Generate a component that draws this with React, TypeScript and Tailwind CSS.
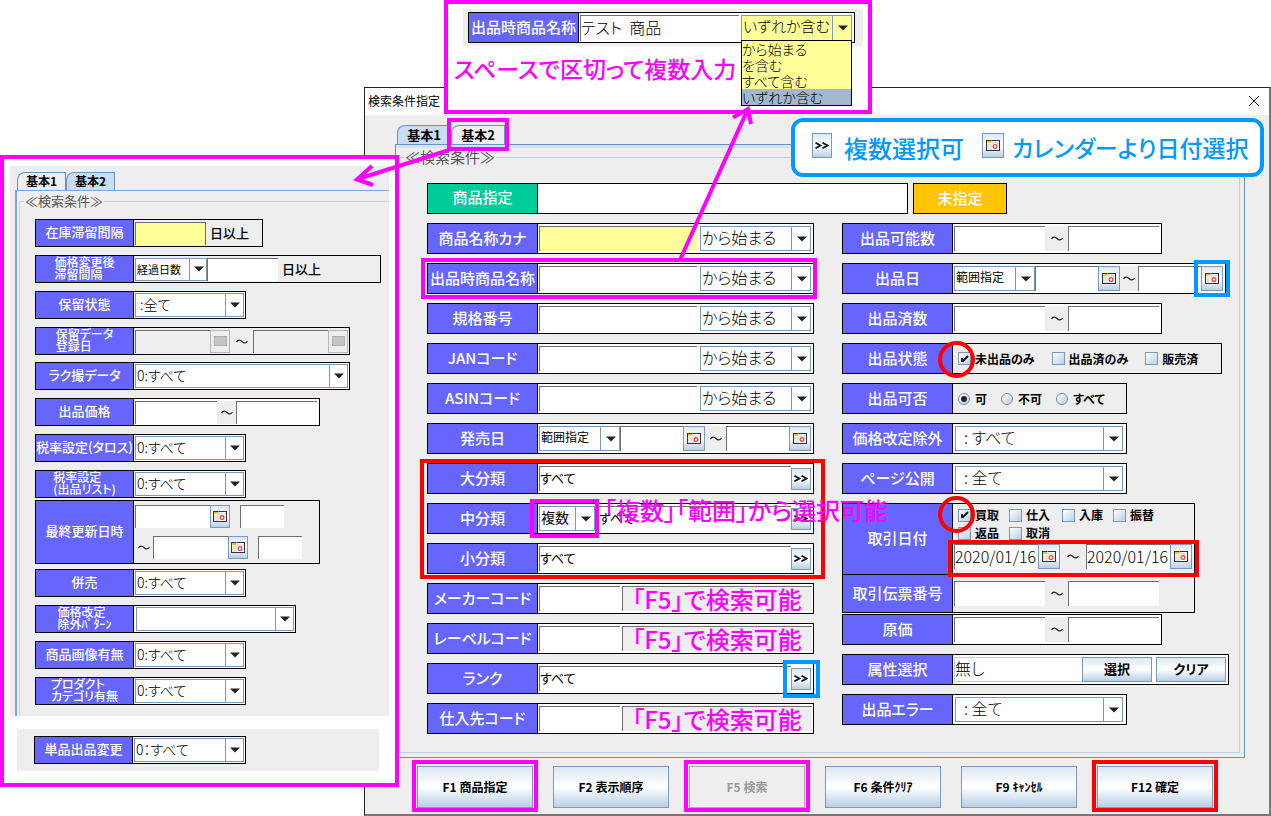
import React, { useState } from 'react';
import clsx from 'clsx';

const SUNKEN = 'border-t border-l border-[#6f6f6f]';
const BUTTON = 'border border-[#7a9ab8] bg-linear-to-b from-[#dde8f3] via-white to-[#b8cfe5]';

const FUNCTION_KEYS = [
  { key: 'F1', text: '商品指定', ring: 'border-[#ff00ff]' },
  { key: 'F2', text: '表示順序' },
  { key: 'F5', text: '検索', ring: 'border-[#ff00ff]', disabled: true },
  { key: 'F6', text: '条件ｸﾘｱ' },
  { key: 'F9', text: 'ｷｬﾝｾﾙ' },
  { key: 'F12', text: '確定', ring: 'border-[#ff0000]' },
];

function Row({
  id,
  label,
  width,
  className = 'bg-white',
  small,
  children,
}: {
  id: string;
  label: string;
  width: string;
  className?: string;
  small?: boolean;
  children: React.ReactNode;
}) {
  const lines = label.split('\n');
  return (
    <div className={clsx('relative flex border border-black', small ? 'min-h-7' : 'min-h-[31px]', width, className)}>
      <label
        htmlFor={id}
        className={clsx(
          'flex shrink-0 items-center justify-center border-r border-black bg-[#6666ff] pb-[2px] whitespace-nowrap text-white font-medium',
          small ? 'w-[98px]' : 'w-[110px] text-[15px] leading-5',
          small && (lines.length > 1 ? 'text-xs leading-3' : 'text-[13px] leading-4')
        )}
      >
        <span>
          {lines.map((line) => (
            <span key={line} className="block">
              {line}
            </span>
          ))}
        </span>
      </label>
      <div className="flex min-w-0 flex-1 items-center px-px">{children}</div>
    </div>
  );
}

function Field({
  id,
  name,
  className,
  value,
  disabled,
}: {
  id?: string;
  name: string;
  className: string;
  value?: string;
  disabled?: boolean;
}) {
  return (
    <input
      id={id}
      aria-label={id ? undefined : name}
      defaultValue={value}
      disabled={disabled}
      className={clsx(SUNKEN, 'block min-w-0 pb-[3px] outline-none', className)}
    />
  );
}

function Select({
  id,
  name,
  options,
  value,
  box,
  className = 'bg-white text-base',
  arrow = 'w-5',
}: {
  id?: string;
  name: string;
  options: string[];
  value?: string;
  box: string;
  className?: string;
  arrow?: string;
}) {
  return (
    <div className={clsx('relative shrink-0', box)}>
      <select
        id={id}
        aria-label={id ? undefined : name}
        defaultValue={value ?? options[0]}
        className={clsx(
          'block h-full w-full appearance-none border border-[#7a9ab8] pb-[3px] pl-px leading-5 outline-none',
          className
        )}
      >
        {options.map((o) => (
          <option key={o}>{o}</option>
        ))}
      </select>
      <span
        className={clsx(
          'pointer-events-none absolute inset-y-0 right-0 flex items-center justify-center border-l border-[#7a9ab8]',
          arrow
        )}
      >
        <svg width="10" height="6" viewBox="0 0 10 6">
          <path d="M0 0.5h10L5 5.5z" fill="#222" />
        </svg>
      </span>
    </div>
  );
}

function CalendarIcon({ muted }: { muted?: boolean }) {
  if (muted) {
    return (
      <svg width="13" height="10" viewBox="0 0 13 10">
        <rect x="0.5" y="0.5" width="12" height="9" fill="#c4c4c4" stroke="#b0b0b0" />
      </svg>
    );
  }
  return (
    <svg width="14" height="11" viewBox="0 0 14 11">
      <rect x="0.5" y="0.5" width="13" height="10" fill="#fff" stroke="#333" />
      <rect x="1" y="4" width="5" height="6" fill="#e6e6e6" />
      <path d="M1 1h4v2H1z" fill="#ffc61a" />
      <path d="M5 1h1v2h7" stroke="#ccc" fill="none" />
      <circle cx="9" cy="6.5" r="1.9" fill="#fff" stroke="#f33" strokeWidth="1.2" />
    </svg>
  );
}

function CalendarButton({
  className = 'h-[25px] w-[22px]',
  disabled,
}: {
  className?: string;
  disabled?: boolean;
}) {
  return (
    <button
      aria-label="カレンダー"
      disabled={disabled}
      className={clsx(
        'flex shrink-0 items-center justify-center',
        disabled ? 'border border-[#b5b5b5] bg-[#eee]' : BUTTON,
        className
      )}
    >
      <CalendarIcon muted={disabled} />
    </button>
  );
}

function MoreButton() {
  return (
    <button aria-label="複数選択" className={clsx(BUTTON, 'mr-px flex h-[22px] w-5 shrink-0 items-center justify-center')}>
      <MoreIcon />
    </button>
  );
}

function MoreIcon() {
  return (
    <svg width="14" height="7" viewBox="0 0 14 7" fill="none" stroke="#111" strokeWidth="1.7">
      <path d="M0.5 0.7L5.5 3.5L0.5 6.3M7.5 0.7L12.5 3.5L7.5 6.3" />
    </svg>
  );
}

function Tilde({ className }: { className: string }) {
  return (
    <span className={clsx('flex shrink-0 items-center justify-center bg-[#eee]', className)}>
      <svg width="12" height="5" viewBox="0 0 12 5" fill="none" stroke="#222" strokeWidth="1.2">
        <path d="M0.5 3C2 0.5 4 0.5 6 2.5S10 4.5 11.5 2" />
      </svg>
    </span>
  );
}

function Check({ label, checked, className }: { label: string; checked?: boolean; className?: string }) {
  return (
    <label className={clsx('relative flex items-center gap-1 text-xs leading-4 font-bold whitespace-nowrap', className)}>
      <input
        type="checkbox"
        defaultChecked={checked}
        className="peer size-[13px] shrink-0 appearance-none border border-[#7a9ab8] bg-linear-to-br from-white to-[#b8cfe5]"
      />
      <svg
        className="pointer-events-none absolute left-[3px] hidden peer-checked:block"
        width="8"
        height="8"
        viewBox="0 0 8 8"
        fill="none"
        stroke="#111"
        strokeWidth="1.8"
      >
        <path d="M1 3v4M1.5 6.5L7 1" />
      </svg>
      {label}
    </label>
  );
}

function Radio({ label, checked }: { label: string; checked?: boolean }) {
  return (
    <label className="flex items-center gap-[5px] text-xs leading-4 font-bold whitespace-nowrap">
      <span className="relative flex size-3 items-center justify-center">
        <input
          type="radio"
          name="listable"
          defaultChecked={checked}
          className="peer size-3 appearance-none rounded-full border border-[#7a8a9a] bg-linear-to-br from-white to-[#b8cfe5]"
        />
        <span className="pointer-events-none absolute hidden size-[6px] rounded-full bg-[#222] peer-checked:block" />
      </span>
      {label}
    </label>
  );
}

function Ring({ className }: { className: string }) {
  return <span className={clsx('pointer-events-none absolute z-10 border-4', className)} />;
}

function MatchRow({ id, label, yellow, ring }: { id: string; label: string; yellow?: boolean; ring?: boolean }) {
  return (
    <Row id={id} label={label} width="w-full">
      <Field id={id} name={label} className={clsx('mr-[3px] h-[25px] flex-1', yellow ? 'bg-[#ffff99]' : 'bg-white')} />
      <Select
        name={`${label} 条件`}
        options={['から始まる', 'を含む', 'すべて含む', 'いずれか含む']}
        box="mr-px h-[25px] w-[111px]"
        className="bg-white text-base font-light"
      />
      {ring && <Ring className="-left-[7px] -right-1 -inset-y-[6px] border-[#ff00ff]" />}
    </Row>
  );
}

function CodeRow({ id, label }: { id: string; label: string }) {
  return (
    <Row id={id} label={label} width="w-full">
      <Field id={id} name={label} className="h-[25px] w-[81px] bg-white" />
      <div className="relative ml-[2px] flex-1">
        <Field name={`${label} 名称`} disabled className="h-[25px] w-full bg-[#eee]" />
        <span className="absolute inset-0 flex items-center justify-center pt-px text-2xl font-medium whitespace-nowrap text-[#ff00ff]">
          「F5」で検索可能
        </span>
      </div>
    </Row>
  );
}

function RangeFields({ id, label }: { id: string; label: string }) {
  return (
    <>
      <Field id={id} name={label} className="h-[25px] w-[91px] bg-white" />
      <Tilde className="h-[25px] w-[23px]" />
      <Field name={`${label} 終了`} className="h-[25px] w-[91px] bg-white" />
    </>
  );
}

function DateRange({ id, label, ring }: { id: string; label: string; ring?: boolean }) {
  return (
    <>
      <Select id={id} name={label} options={['範囲指定']} box="h-[25px] w-[81px]" className="bg-white text-xs" />
      <Field name={`${label} 開始`} className="h-[25px] w-[63px] bg-white" />
      <CalendarButton />
      <Tilde className="h-[25px] flex-1" />
      <Field name={`${label} 終了`} className="h-[25px] w-[63px] bg-white" />
      <div className="relative mr-px">
        <CalendarButton />
        {ring && <Ring className="-inset-x-[7px] -inset-y-[6px] border-[#0099ff]" />}
      </div>
    </>
  );
}

function SmallSelect({
  id,
  label,
  options = ['0:すべて'],
  box = 'h-6 w-[109px]',
}: {
  id: string;
  label: string;
  options?: string[];
  box?: string;
}) {
  return <Select id={id} name={label} options={options} box={box} className="bg-white text-sm font-light" arrow="w-[19px]" />;
}

function WideSelect({ id, label, options }: { id: string; label: string; options: string[] }) {
  return (
    <Select id={id} name={label} options={options} box="ml-px h-[25px] w-[168px]" className="bg-white text-base font-light" />
  );
}

function Tabs({ active, onChange, small }: { active: number; onChange: (n: number) => void; small?: boolean }) {
  return (
    <div role="tablist" className="ml-[2px] flex">
      {['基本1', '基本2'].map((name, i) => (
        <div key={name} className="relative">
          <button
            role="tab"
            aria-selected={active === i}
            onClick={() => onChange(i)}
            className={clsx(
              'block rounded-tl-lg border border-b-0 border-[#6a93c0] pb-px font-bold',
              small ? 'h-[18px] w-[49px] text-xs leading-4' : 'h-[19px] w-[54px] text-[13px] leading-4',
              active === i ? 'bg-[#c8ddf2]' : 'bg-[#eee]'
            )}
          >
            {name}
          </button>
          {!small && i === 1 && <Ring className="-inset-x-1 -inset-y-[7px] border-[#ff00ff]" />}
        </div>
      ))}
    </div>
  );
}

function BasicOneForm() {
  return (
    <>
      <div className="flex gap-[5px]">
        <div className="flex h-[31px] w-[481px] border border-black bg-white">
          <label
            htmlFor="item"
            className="flex w-[110px] shrink-0 items-center justify-center border-r border-black bg-[#00cc99] pb-[2px] text-[15px] font-medium text-white"
          >
            商品指定
          </label>
          <input id="item" className="min-w-0 flex-1 outline-none" />
        </div>
        <button className="h-[31px] w-[94px] border border-black bg-[#ffc600] pb-[2px] text-[15px] leading-5 font-medium text-white">
          未指定
        </button>
      </div>

      <div className="mt-[9px] flex items-start gap-7">
        <div className="flex w-[387px] flex-col gap-[9px]">
          <MatchRow id="kana" label="商品名称カナ" yellow />
          <MatchRow id="listed-name" label="出品時商品名称" ring />
          <MatchRow id="standard" label="規格番号" />
          <MatchRow id="jan" label="JANコード" />
          <MatchRow id="asin" label="ASINコード" />
          <Row id="release" label="発売日" width="w-full">
            <DateRange id="release" label="発売日" />
          </Row>

          {/* Category rows share one red frame */}
          <div className="relative flex flex-col gap-[9px]">
            <Row id="large" label="大分類" width="w-full">
              <Field id="large" name="大分類" value="すべて" className="h-[25px] flex-1 bg-white text-[13px]" />
              <MoreButton />
            </Row>
            <Row id="middle" label="中分類" width="w-full">
              <div className="relative">
                <Select id="middle" name="中分類" options={['複数', '範囲']} box="h-[25px] w-14" className="bg-white text-sm" />
                <Ring className="-left-[9px] -right-1 -inset-y-[7px] border-[#ff00ff]" />
              </div>
              <Field name="中分類 値" value="すべて" className="h-[25px] flex-1 bg-white pl-[3px] text-[13px]" />
              <MoreButton />
              <span className="absolute -top-[6px] left-[176px] z-20 text-2xl leading-6 font-medium whitespace-nowrap text-[#ff00ff]">
                「複数」「範囲」から選択可能
              </span>
            </Row>
            <Row id="small" label="小分類" width="w-full">
              <Field id="small" name="小分類" value="すべて" className="h-[25px] flex-1 bg-white text-[13px]" />
              <MoreButton />
            </Row>
            <Ring className="-left-[7px] -right-[11px] -top-1 -bottom-[5px] border-[#ff0000]" />
          </div>

          <CodeRow id="maker" label="メーカーコード" />
          <CodeRow id="label" label="レーベルコード" />
          <Row id="rank" label="ランク" width="w-full">
            <Field id="rank" name="ランク" value="すべて" className="h-[25px] flex-1 bg-white text-[13px]" />
            <div className="relative">
              <MoreButton />
              <Ring className="-inset-2 border-[#0099ff]" />
            </div>
          </Row>
          <CodeRow id="supplier" label="仕入先コード" />
        </div>

        <div className="flex flex-col gap-[9px]">
          <Row id="available" label="出品可能数" width="w-[320px]">
            <RangeFields id="available" label="出品可能数" />
          </Row>
          <Row id="list-date" label="出品日" width="w-[384px]">
            <DateRange id="list-date" label="出品日" ring />
          </Row>
          <Row id="listed" label="出品済数" width="w-[320px]">
            <RangeFields id="listed" label="出品済数" />
          </Row>
          <Row id="status" label="出品状態" width="w-[380px]" className="bg-[#eee]">
            <div id="status" className="flex gap-[17px] pl-1">
              <div className="relative">
                <Check label="未出品のみ" checked />
                <Ring className="-top-[10px] -left-5 size-[37px] rounded-full border-[#ff0000]" />
              </div>
              <Check label="出品済のみ" />
              <Check label="販売済" />
            </div>
          </Row>
          <Row id="listable" label="出品可否" width="w-[285px]" className="bg-[#eee]">
            <div id="listable" className="flex gap-[14px] pl-1">
              <Radio label="可" checked />
              <Radio label="不可" />
              <Radio label="すべて" />
            </div>
          </Row>
          <Row id="price-ex" label="価格改定除外" width="w-[285px]">
            <WideSelect id="price-ex" label="価格改定除外" options={['\u00a0\u00a0: すべて']} />
          </Row>
          <Row id="page" label="ページ公開" width="w-[285px]">
            <WideSelect id="page" label="ページ公開" options={['\u00a0\u00a0: 全て']} />
          </Row>

          <div className="flex flex-col gap-px">
            <div className="w-[353px]">
              <Row id="deal-date" label="取引日付" width="w-full" className="bg-[#eee]">
                <div className="relative flex-1">
                  <div className="flex gap-[11px] pt-[3px] pl-1">
                    <div className="relative">
                      <Check label="買取" checked className="w-10" />
                      <Ring className="-top-[11px] -left-5 size-[37px] rounded-full border-[#ff0000]" />
                    </div>
                    <Check label="仕入" className="w-[42px]" />
                    <Check label="入庫" className="w-10" />
                    <Check label="振替" />
                  </div>
                  <div className="mt-[2px] flex gap-[11px] pl-1">
                    <Check label="返品" className="w-10" />
                    <Check label="取消" />
                  </div>
                  <div className="relative mt-[3px] mb-[5px] flex items-center">
                    <Field id="deal-date" name="取引日付" value="2020/01/16" className="h-[25px] w-[84px] bg-white text-base font-light" />
                    <CalendarButton />
                    <Tilde className="h-[25px] w-[26px]" />
                    <Field name="取引日付 終了" value="2020/01/16" className="h-[25px] w-[84px] bg-white text-base font-light" />
                    <CalendarButton />
                    <Ring className="-top-1 -bottom-2 -left-[6px] -right-[6px] border-[#ff0000]" />
                  </div>
                </div>
              </Row>
              <Row id="slip" label="取引伝票番号" width="w-full" className="-mt-px bg-[#eee]">
                <div className="flex h-[37px] items-center">
                  <RangeFields id="slip" label="取引伝票番号" />
                </div>
              </Row>
            </div>
            <Row id="cost" label="原価" width="w-[320px]">
              <RangeFields id="cost" label="原価" />
            </Row>
          </div>

          <Row id="attr" label="属性選択" width="w-[387px]">
            <input
              id="attr"
              defaultValue="無し"
              className="h-[25px] min-w-0 flex-1 border border-r-0 border-[#b8cfe5] pb-[3px] text-base font-light outline-none"
            />
            <button className={clsx(BUTTON, 'mr-1 h-[25px] w-[70px] shrink-0 pb-[2px] text-[13px] leading-4 font-bold')}>選択</button>
            <button className={clsx(BUTTON, 'mr-px h-[25px] w-[70px] shrink-0 pb-[2px] text-[13px] leading-4 font-bold')}>クリア</button>
          </Row>
          <Row id="error" label="出品エラー" width="w-[285px]">
            <WideSelect id="error" label="出品エラー" options={['\u00a0\u00a0: 全て']} />
          </Row>
        </div>
      </div>
    </>
  );
}

function BasicTwoForm() {
  return (
    <>
      <div className="flex flex-col gap-2">
        <Row small id="stay" label="在庫滞留間隔" width="w-[228px]" className="bg-[#eee]">
          <Field id="stay" name="在庫滞留間隔" className="h-[23px] w-[71px] border-r bg-[#ffff99]" />
          <span className="ml-1 pb-px text-[13px] leading-4 font-medium">日以上</span>
        </Row>
        <Row small id="changed" label={'価格変更後\n滞留間隔'} width="w-[346px]" className="bg-[#eee]">
          <Select id="changed" name="滞留間隔 種類" options={['経過日数']} box="h-[23px] w-[72px]" className="bg-white text-[11px]" arrow="w-[18px]" />
          <Field name="滞留間隔" className="h-[23px] w-[71px] bg-white" />
          <span className="ml-1 pb-px text-[13px] leading-4 font-medium">日以上</span>
        </Row>
        <Row small id="hold" label="保留状態" width="w-[211px]">
          <SmallSelect id="hold" label="保留状態" options={['\u00a0:全て']} />
        </Row>
        <Row small id="hold-date" label={'保留データ\n登録日'} width="w-[315px]" className="bg-[#eee]">
          <Field id="hold-date" name="登録日" disabled className="h-[23px] w-[75px]" />
          <CalendarButton disabled className="h-[23px] w-5" />
          <Tilde className="h-5 w-[23px]" />
          <Field name="登録日 終了" disabled className="h-[23px] w-[75px]" />
          <CalendarButton disabled className="h-[23px] w-5" />
        </Row>
      </div>
      <div className="mt-[7px] flex flex-col gap-2">
        <Row small id="raku" label="ラク撮データ" width="w-[315px]">
          <SmallSelect id="raku" label="ラク撮データ" box="h-6 w-[213px]" />
        </Row>
        <Row small id="price" label="出品価格" width="w-[285px]">
          <Field id="price" name="出品価格" className="h-[23px] w-[82px] bg-white" />
          <Tilde className="h-[23px] w-[19px]" />
          <Field name="出品価格 終了" className="h-[23px] w-[81px] bg-white" />
        </Row>
        <Row small id="tax-talos" label="税率設定(タロス)" width="w-[211px]">
          <SmallSelect id="tax-talos" label="税率設定(タロス)" />
        </Row>
        <Row small id="tax-list" label={'税率設定\n(出品リスト)'} width="w-[211px]">
          <SmallSelect id="tax-list" label="税率設定(出品リスト)" />
        </Row>
      </div>
      <div className="mt-[2px]">
        <Row small id="updated" label="最終更新日時" width="w-[285px]" className="bg-[#eee]">
          <div className="flex flex-col gap-2 py-1">
            <div className="flex">
              <Field id="updated" name="最終更新日時" className="h-[23px] w-[75px] bg-white" />
              <CalendarButton className="mr-[10px] h-[23px] w-5" />
              <Field name="開始時刻" className="h-[23px] w-[44px] bg-white" />
            </div>
            <div className="flex">
              <Tilde className="h-[23px] w-[18px]" />
              <Field name="終了日" className="h-[23px] w-[75px] bg-white" />
              <CalendarButton className="mr-[10px] h-[23px] w-5" />
              <Field name="終了時刻" className="h-[23px] w-[44px] bg-white" />
            </div>
          </div>
        </Row>
      </div>
      <div className="mt-[5px] flex flex-col gap-2">
        <Row small id="parallel" label="併売" width="w-[211px]">
          <SmallSelect id="parallel" label="併売" />
        </Row>
        <Row small id="pattern" label={'価格改定\n除外ﾊﾟﾀｰﾝ'} width="w-[261px]">
          <SmallSelect id="pattern" label="除外パターン" options={['']} box="ml-px h-6 w-[158px]" />
        </Row>
        <Row small id="image" label="商品画像有無" width="w-[211px]">
          <SmallSelect id="image" label="商品画像有無" />
        </Row>
        <Row small id="category" label={'プロダクト\nカテゴリ有無'} width="w-[211px]">
          <SmallSelect id="category" label="カテゴリ有無" />
        </Row>
      </div>
    </>
  );
}

function BasicTwoPanel() {
  const [tab, setTab] = useState(1);
  return (
    <section className="absolute top-[155px] left-0 z-20 w-[399px] border-4 border-[#ff00ff] bg-white px-[6px] pt-[7px] pb-3">
      <div className="bg-[#eee] pt-[6px] pl-[5px]">
        <Tabs small active={tab} onChange={setTab} />
        <div className="border-t border-l-2 border-[#7fa6d6]">
          <fieldset className="ml-[2px] border-t border-l border-[#c3d5ea] pb-[11px] pl-[15px]">
            <legend className="-ml-[11px] px-px text-[13px] leading-5 text-[#555]">≪検索条件≫</legend>
            <div className="pt-2">
              <BasicTwoForm />
            </div>
          </fieldset>
        </div>
      </div>
      <div className="mt-[13px] mr-[10px] ml-[7px] bg-[#eee] py-[7px] pl-[17px]">
        <Row small id="single" label="単品出品変更" width="w-[212px]">
          <SmallSelect id="single" label="単品出品変更" options={['0：すべて']} box="h-6 w-[110px]" />
        </Row>
      </div>
    </section>
  );
}

function NameCallout() {
  return (
    <section className="absolute top-0 left-[444px] z-20 h-[114px] w-[428px] border-4 border-[#ff00ff] bg-white">
      <div className="mt-[5px] mr-[5px] ml-[15px] bg-[#eee] pt-[3px] pb-[3px] pl-[5px]">
        <Row id="sample" label="出品時商品名称" width="w-[387px]">
          <Field id="sample" name="出品時商品名称" value="テスト  商品" className="mr-[2px] h-[26px] flex-1 bg-white text-base font-light" />
          <div className="relative mr-px">
            <Select
              name="条件"
              options={['いずれか含む', 'から始まる']}
              box="h-[26px] w-[111px]"
              className="bg-[#ffff99] text-[15px] font-light"
              arrow="w-5"
            />
            <ul className="absolute top-[25px] left-0 w-[111px] border border-black bg-[#ffff99] text-sm leading-4 font-light">
              <li>から始まる</li>
              <li>を含む</li>
              <li>すべて含む</li>
              <li className="bg-[#a3b8cc]">いずれか含む</li>
            </ul>
          </div>
        </Row>
      </div>
      <p className="pt-1 pl-[6px] text-[23px] leading-9 font-medium whitespace-nowrap text-[#ff00ff]">スペースで区切って複数入力</p>
    </section>
  );
}

function Legend() {
  return (
    <div className="absolute top-[118px] right-[7px] z-20 flex h-[59px] w-[473px] items-center rounded-xl border-4 border-[#0099ff] bg-white pl-[17px] text-[23px] font-medium whitespace-nowrap text-[#0099ff]">
      <span className={clsx(BUTTON, 'mb-1 flex h-[25px] w-5 items-center justify-center')}>
        <MoreIcon />
      </span>
      <span className="ml-3 text-2xl">複数選択可</span>
      <span className={clsx(BUTTON, 'mb-1 ml-[18px] flex h-[25px] w-[22px] items-center justify-center')}>
        <CalendarIcon />
      </span>
      <span className="ml-2">カレンダーより日付選択</span>
    </div>
  );
}

function Arrows() {
  return (
    <svg className="pointer-events-none absolute inset-0 z-30 h-full w-full" fill="none" stroke="#ff00ff" strokeWidth="4">
      <path d="M449 150L358 179M372 166L357 179.5L373 185" />
      <path d="M680 260L747 111M733 117.5L748 109L751 124" />
    </svg>
  );
}

function App() {
  const [tab, setTab] = useState(0);

  return (
    <div className="relative flex min-h-screen flex-col bg-white pt-[87px] pl-[364px] font-['Noto_Sans_CJK_JP','Liberation_Sans',sans-serif] text-black [font-feature-settings:'palt']">
      <main className="flex min-w-[906px] flex-1 flex-col border-t border-r-2 border-b-2 border-l border-t-[#222] border-r-[#777] border-b-[#777] border-l-[#222]">
        <header className="flex h-[27px] items-center justify-between bg-white pr-[9px] pb-[2px] pl-[3px]">
          <h1 className="text-xs">検索条件指定</h1>
          <button aria-label="閉じる">
            <svg width="12" height="12" viewBox="0 0 12 12" stroke="#222" strokeWidth="1">
              <path d="M1 1L11 11M11 1L1 11" />
            </svg>
          </button>
        </header>

        <div className="flex-1 bg-[#eee] pt-[10px] pr-6 pb-[6px] pl-[30px]">
          <Tabs active={tab} onChange={setTab} />
          <div className="border border-[#6a93c0] pr-1 pb-1 pl-[3px] shadow-[inset_0_3px_0_#d5e4f5]">
            <fieldset className="border border-[#b8cfe5] pb-[18px] pl-[27px]">
              <legend className="-ml-[23px] px-px text-[15px] leading-6 text-[#555]">≪検索条件≫</legend>
              <div className="pt-[14px]">
                <BasicOneForm />
              </div>
            </fieldset>
          </div>

          <footer className="mt-2 ml-[22px] flex gap-5">
            {FUNCTION_KEYS.map((f) => (
              <div key={f.key} className="relative">
                <button
                  disabled={f.disabled}
                  className={clsx(
                    'block h-[42px] w-[116px] pb-px text-xs font-bold',
                    f.disabled ? 'border border-[#aaa] bg-[#eee] text-[#999]' : BUTTON
                  )}
                >
                  {f.key} {f.text}
                </button>
                {f.ring && <Ring className={clsx('-inset-x-[5px] -top-[6px] -bottom-1', f.ring)} />}
              </div>
            ))}
          </footer>
        </div>
      </main>

      <NameCallout />
      <Legend />
      <BasicTwoPanel />
      <Arrows />
    </div>
  );
}

export default App;
